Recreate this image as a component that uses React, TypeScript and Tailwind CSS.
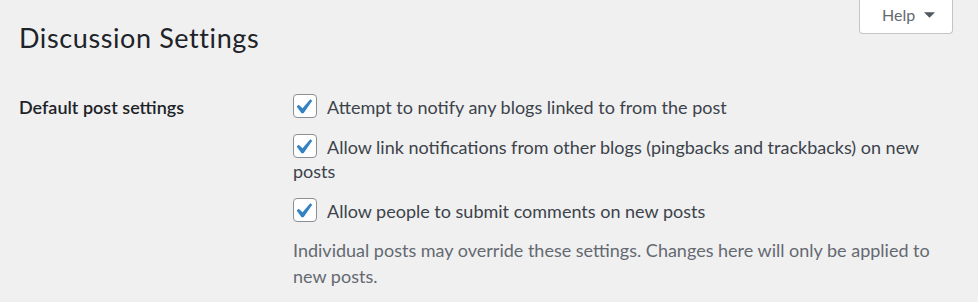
import { useState } from "react";

const options = [
  { id: "default_pingback_flag", text: "Attempt to notify any blogs linked to from the post" },
  {
    id: "default_ping_status",
    text: "Allow link notifications from other blogs (pingbacks and trackbacks) on new posts",
  },
  { id: "default_comment_status", text: "Allow people to submit comments on new posts" },
];

const CheckBox = ({ checked, onToggle }: { checked: boolean; onToggle: () => void }) => (
  <span
    role="checkbox"
    aria-checked={checked}
    onClick={onToggle}
    className="relative inline-block w-6 h-6 -mt-[6px] mr-[10px] align-middle rounded-[4px] border border-[#8c8f94] bg-white cursor-pointer"
  >
    {checked && (
      <svg
        viewBox="0 0 20 20"
        className="absolute w-[30px] h-[30px] -left-[6px] -top-[3.5px]"
      >
        <path
          d="M14.83 4.89l1.34.94-5.81 8.38H9.02L5.78 9.67l1.34-1.25 2.57 2.4z"
          fill="#3582c4"
        />
      </svg>
    )}
  </span>
);

const App = () => {
  const [checked, setChecked] = useState<Record<string, boolean>>({
    default_pingback_flag: true,
    default_ping_status: true,
    default_comment_status: true,
  });

  return (
    <div className="min-h-screen bg-[#f0f0f1] font-['Lato','Open_Sans',sans-serif]">
      {/* Help tab */}
      <div className="float-right mr-[25px]">
        <button className="flex items-start h-[34px] w-[94px] pl-[22px] pt-[5px] bg-white border border-t-0 border-[#c3c4c7] rounded-b-[4px] text-[16px] leading-[20px] text-[#646970]">
          Help
          <svg viewBox="0 0 12 6" className="w-[11px] h-[6px] ml-[9px] mt-[7px]">
            <path d="M0 0h12L6 6z" fill="#50575e" />
          </svg>
        </button>
      </div>

      <div className="pl-[19px]">
        <h1 className="pt-[22px] text-[27px] leading-[32px] tracking-[0.6px] font-normal text-[#1d2327]">
          Discussion Settings
        </h1>

        <div className="flex mt-[41px]">
          <div className="w-[274px] shrink-0 text-[18px] leading-[24px] font-semibold text-[#1d2327]">
            Default post settings
          </div>

          <div className="w-[648px] text-[18px] text-[#3c434a]">
            <div className="flex flex-col gap-4">
              {options.map((o) => (
                <label key={o.id} className="block leading-[24px]">
                  <CheckBox
                    checked={checked[o.id]}
                    onToggle={() => setChecked({ ...checked, [o.id]: !checked[o.id] })}
                  />
                  {o.text}
                </label>
              ))}
            </div>
            <p className="mt-[14px] leading-[26px] text-[#646970]">
              Individual posts may override these settings. Changes here will only be applied to
              new posts.
            </p>
          </div>
        </div>
      </div>
    </div>
  );
};

export default App;
